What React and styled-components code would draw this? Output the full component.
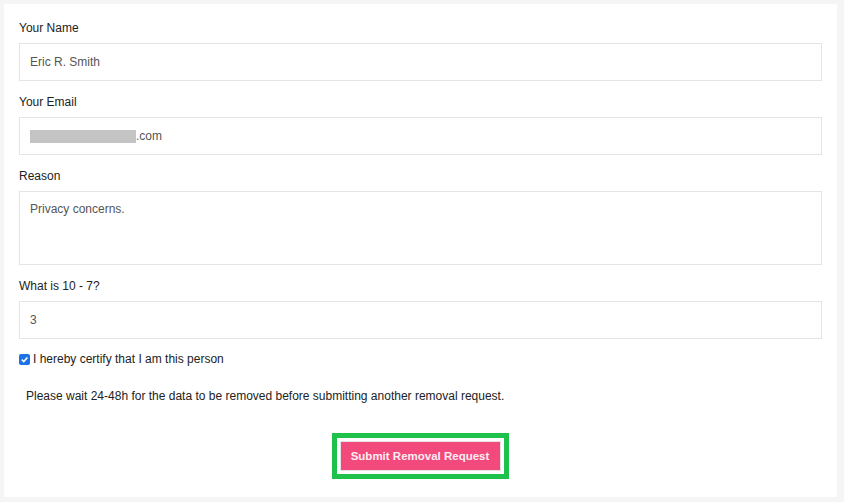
import React from 'react';
import styled, { createGlobalStyle } from 'styled-components';

const GlobalStyle = createGlobalStyle`
  html, body {
    margin: 0;
    padding: 0;
    background: #f5f5f5;
    font-family: Arial, "Liberation Sans", sans-serif;
  }
`

const Pagina = styled.div`
  padding: 4px 7px 5px 4px;
  min-height: 502px;
  box-sizing: border-box;
`
const Cartao = styled.form`
  background: #ffffff;
  padding: 15px 15px 19px 15px;
  box-sizing: border-box;
  height: 493px;
`
const Campo = styled.div`
  margin-bottom: ${props => props.$ultimo ? 0 : 12}px;
`
const Rotulo = styled.label`
  display: block;
  font-size: 12px;
  line-height: 18px;
  color: #222222;
  margin-bottom: 6px;
`
const Entrada = styled.div`
  box-sizing: border-box;
  height: ${props => props.$alto || 38}px;
  border: 1px solid #e4e4e4;
  padding: ${props => props.$alto ? '10px' : '0 10px'};
  display: flex;
  align-items: ${props => props.$alto ? 'flex-start' : 'center'};
  font-size: 12px;
  color: #555555;
`
const Borrao = styled.span`
  display: inline-block;
  width: 106px;
  height: 13px;
  background: #c4c4c4;
`
const LinhaCheck = styled.label`
  display: flex;
  align-items: center;
  gap: 3px;
  font-size: 12px;
  color: #222222;
  height: 14px;
  margin-top: 13px;
`
const CaixaCheck = styled.span`
  width: 11px;
  height: 11px;
  border-radius: 2px;
  background: #1a73e8;
  display: flex;
  align-items: center;
  justify-content: center;
`
const Aviso = styled.p`
  margin: 22px 0 0 7px;
  font-size: 12px;
  line-height: 16px;
  color: #222222;
`
const Rodape = styled.div`
  display: flex;
  justify-content: center;
  margin-top: 29px;
  padding-right: 1px;
`
const Destaque = styled.div`
  border: 5px solid #1ec24a;
  padding: 3px;
`
const Botao = styled.button`
  border: 1px solid #e8e2e4;
  background: #f24a7c;
  color: #fbeef2;
  font-family: Arial, "Liberation Sans", sans-serif;
  font-size: 11.5px;
  font-weight: bold;
  height: 30px;
  width: 161px;
  padding: 0;
`

export default function App() {
  return (
    <Pagina>
      <GlobalStyle />
      <Cartao>
        <Campo>
          <Rotulo>Your Name</Rotulo>
          <Entrada>Eric R. Smith</Entrada>
        </Campo>
        <Campo>
          <Rotulo>Your Email</Rotulo>
          <Entrada><Borrao />.com</Entrada>
        </Campo>
        <Campo>
          <Rotulo>Reason</Rotulo>
          <Entrada $alto={74}>Privacy concerns.</Entrada>
        </Campo>
        <Campo $ultimo>
          <Rotulo>What is 10 - 7?</Rotulo>
          <Entrada>3</Entrada>
        </Campo>
        <LinhaCheck>
          <CaixaCheck>
            <svg width="9" height="9" viewBox="0 0 10 10">
              <path d="M2 5.2 L4.2 7.3 L8.2 2.8" stroke="#fff" strokeWidth="1.8" fill="none" />
            </svg>
          </CaixaCheck>
          I hereby certify that I am this person
        </LinhaCheck>
        <Aviso>Please wait 24-48h for the data to be removed before submitting another removal request.</Aviso>
        <Rodape>
          <Destaque>
            <Botao type="button">Submit Removal Request</Botao>
          </Destaque>
        </Rodape>
      </Cartao>
    </Pagina>
  );
}
